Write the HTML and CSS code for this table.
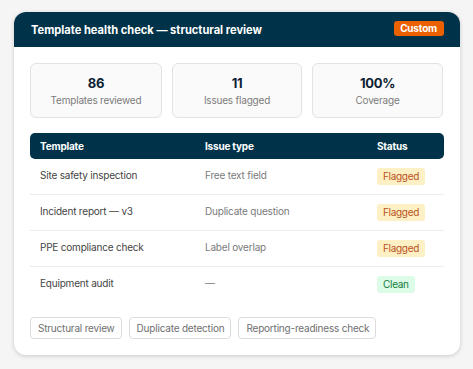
FILE: index.html
```html
<!DOCTYPE html>
<html>
<head>
<meta charset="utf-8">
<link rel="stylesheet" href="styles.css">
</head>
<body>
<div class="card">
  <div class="card-head">
    <span class="title">Template health check — structural review</span>
    <span class="custom">Custom</span>
  </div>
  <div class="card-body">
    <div class="stats">
      <div class="stat"><div class="num">86</div><div class="lbl">Templates reviewed</div></div>
      <div class="stat"><div class="num">11</div><div class="lbl">Issues flagged</div></div>
      <div class="stat"><div class="num">100%</div><div class="lbl">Coverage</div></div>
    </div>
    <div class="tbl">
      <div class="row head"><span class="c1">Template</span><span class="c2">Issue type</span><span class="c3">Status</span></div>
      <div class="row"><span class="c1 name">Site safety inspection</span><span class="c2 issue">Free text field</span><span class="c3"><span class="pill flag">Flagged</span></span></div>
      <div class="row"><span class="c1 name">Incident report — v3</span><span class="c2 issue">Duplicate question</span><span class="c3"><span class="pill flag">Flagged</span></span></div>
      <div class="row"><span class="c1 name">PPE compliance check</span><span class="c2 issue">Label overlap</span><span class="c3"><span class="pill flag">Flagged</span></span></div>
      <div class="row last"><span class="c1 name">Equipment audit</span><span class="c2 issue">—</span><span class="c3"><span class="pill clean">Clean</span></span></div>
    </div>
    <div class="tags">
      <span class="tag">Structural review</span>
      <span class="tag">Duplicate detection</span>
      <span class="tag">Reporting-readiness check</span>
    </div>
  </div>
</div>
</body>
</html>
```
FILE: styles.css
```css
html, body { margin: 0; padding: 0; }
body {
  background: #f5f5f5;
  font-family: Inter, "Liberation Sans", sans-serif;
  padding: 12px 13px 13px 14px;
}
.card {
  width: 446px;
  background: #fff;
  border-radius: 12px;
  box-shadow: 0 1px 4px rgba(0,0,0,0.18);
  overflow: hidden;
}
.card-head {
  background: #003349;
  height: 35px;
  display: flex;
  align-items: center;
  justify-content: space-between;
  padding: 0 16px 0 17px;
}
.title {
  color: #fff;
  font-weight: 700;
  font-size: 11.1px;
  margin-top: 1px;
}
.custom {
  background: #eb6100;
  color: #fff;
  font-weight: 700;
  font-size: 10px;
  letter-spacing: -0.2px;
  line-height: 13px;
  padding: 1px 7px 1px 6px;
  border-radius: 3px;
  margin-top: -2px;
}
.card-body {
  padding: 16px;
}
.stats {
  display: grid;
  grid-template-columns: 132px 130px 131px;
  gap: 10px;
}
.stat {
  height: 52px;
  box-sizing: content-box;
  border: 1px solid #e3e3e3;
  border-radius: 6px;
  background: #fafafa;
  text-align: center;
  display: flex;
  flex-direction: column;
  justify-content: center;
  padding-top: 1px;
}
.num {
  font-weight: 700;
  font-size: 13px;
  letter-spacing: -0.3px;
  color: #0c2233;
  line-height: 16px;
}
.lbl {
  font-size: 10px;
  letter-spacing: -0.2px;
  color: #7a7a7a;
  line-height: 14px;
  margin-top: 2px;
}
.tbl {
  margin-top: 15px;
  width: 414px;
  font-size: 10px;
  letter-spacing: -0.2px;
}
.row {
  display: flex;
  align-items: center;
  height: 35px;
  border-bottom: 1px solid #ececec;
}
.row.last { border-bottom: none; }
.row.head {
  height: 26px;
  background: #003349;
  color: #fff;
  font-weight: 700;
  border-radius: 5px;
  border-bottom: none;
}
.c1 { width: 165px; padding-left: 10px; box-sizing: border-box; }
.c2 { width: 172px; padding-left: 10px; box-sizing: border-box; }
.c3 { flex: 1; padding-left: 10px; }
.name { color: #444; margin-top: -4px; }
.issue { color: #7a7a7a; margin-top: -4px; }
.pill {
  display: inline-block;
  font-size: 10px;
  letter-spacing: -0.3px;
  padding: 2px 6px;
  border-radius: 3px;
  line-height: 13px;
}
.flag { background: #fdf0c4; color: #b9521b; }
.clean { background: #dcfce7; color: #157a3e; }
.tags {
  display: flex;
  gap: 7px;
  margin-top: 15px;
}
.tag {
  border: 1px solid #dcdcdc;
  border-radius: 4px;
  color: #6f6f6f;
  font-size: 10px;
  letter-spacing: -0.2px;
  padding: 3px 6px 3px 7px;
  line-height: 14px;
}
```
